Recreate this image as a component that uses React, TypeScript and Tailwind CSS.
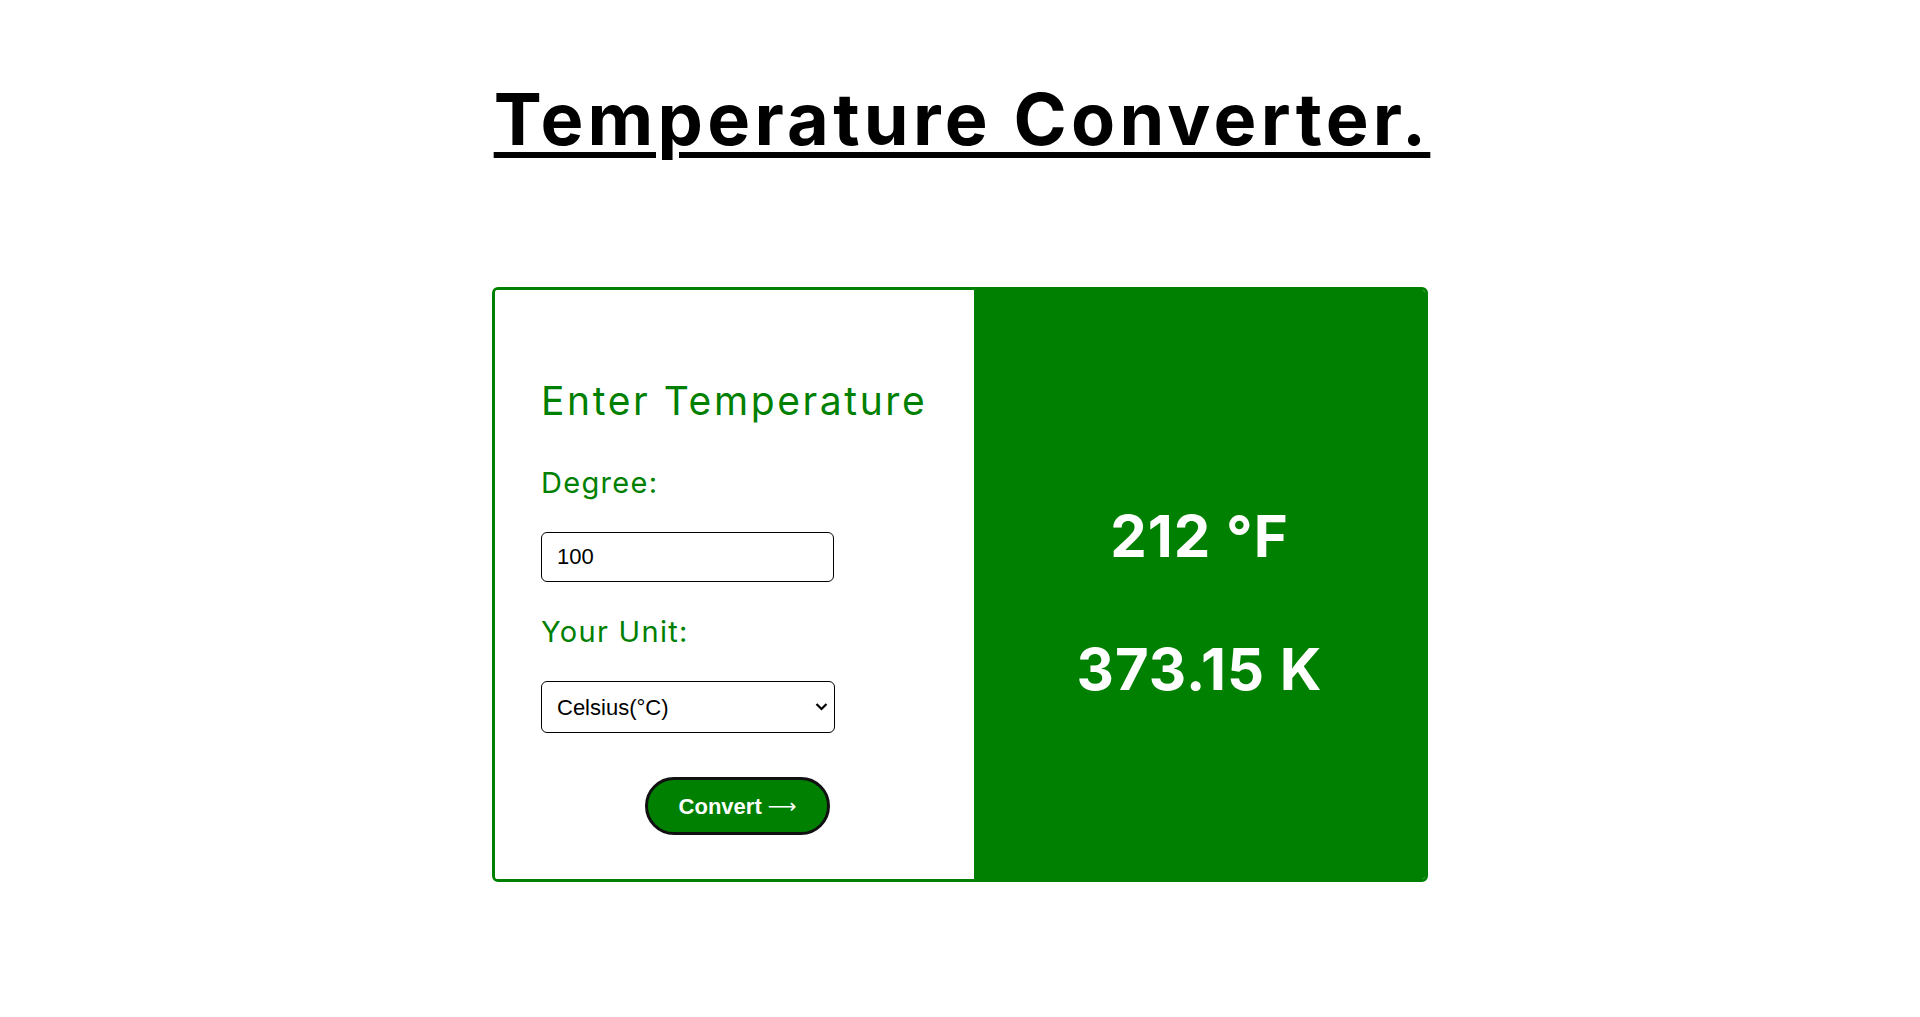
import { useState } from "react";

const green = "#008000";

export default function App() {
  const [degree, setDegree] = useState("100");
  const [unit, setUnit] = useState("C");

  const c = parseFloat(degree) || 0;
  const f = Math.round((c * 9) / 5 + 32);
  const k = (c + 273.15).toFixed(2).replace(/\.?0+$/, "");

  return (
    <div className="min-h-screen bg-white flex flex-col items-center font-['Inter',sans-serif]">
      <h1 className="pt-[83px] pl-[4px] text-[72px] leading-none font-bold tracking-[4.3px] text-black underline decoration-[6px] underline-offset-[7px] whitespace-nowrap">
        Temperature Converter.
      </h1>

      <div className="mt-[132px] w-[936px] h-[595px] flex border-[3px] border-[#008000] rounded-[6px] overflow-hidden">
        <div className="w-[479px] shrink-0 bg-white pl-[46px] pt-[91px] flex flex-col text-[#008000]">
          <h2 className="text-[39px] leading-none font-normal tracking-[2.6px] whitespace-nowrap">Enter Temperature</h2>
          <label className="mt-[48px] text-[29px] leading-none tracking-[1.3px]">Degree:</label>
          <input
            value={degree}
            onChange={(e) => setDegree(e.target.value)}
            className="mt-[35px] w-[293px] h-[50px] border border-black rounded-[6px] pl-[15px] text-[22px] text-black font-['Liberation_Sans',Arial,sans-serif] outline-none"
          />
          <label className="mt-[35px] text-[29px] leading-none tracking-[1.3px]">Your Unit:</label>
          <div className="mt-[35px] relative w-[294px] h-[52px]">
            <select
              value={unit}
              onChange={(e) => setUnit(e.target.value)}
              className="appearance-none w-full h-full border border-black rounded-[6px] pl-[15px] text-[22px] text-black bg-white font-['Liberation_Sans',Arial,sans-serif] outline-none"
            >
              <option value="C">Celsius(°C)</option>
              <option value="F">Fahrenheit(°F)</option>
              <option value="K">Kelvin(K)</option>
            </select>
            <svg
              className="absolute right-[7px] top-[21px] pointer-events-none"
              width="13"
              height="9"
              viewBox="0 0 13 9"
              fill="none"
            >
              <path d="M1.5 2 L6.5 7 L11.5 2" stroke="black" strokeWidth="2.2" />
            </svg>
          </div>
          <button className="mt-[44px] ml-[104px] w-[185px] h-[58px] rounded-full border-[3px] border-[#111] bg-[#008000] text-white text-[22px] font-bold font-['Liberation_Sans',Arial,sans-serif] flex items-center justify-center gap-[6px]">
            <span>Convert</span>
            <span className="font-['DejaVu_Sans',sans-serif] font-normal text-[20px]">⟶</span>
          </button>
        </div>

        <div
          className="flex-1 flex flex-col items-center justify-center pt-[36px] text-white font-bold text-[58px] leading-none tracking-[1px]"
          style={{ backgroundColor: green }}
        >
          <div>{f} °F</div>
          <div className="mt-[75px]">{k} K</div>
        </div>
      </div>
    </div>
  );
}
